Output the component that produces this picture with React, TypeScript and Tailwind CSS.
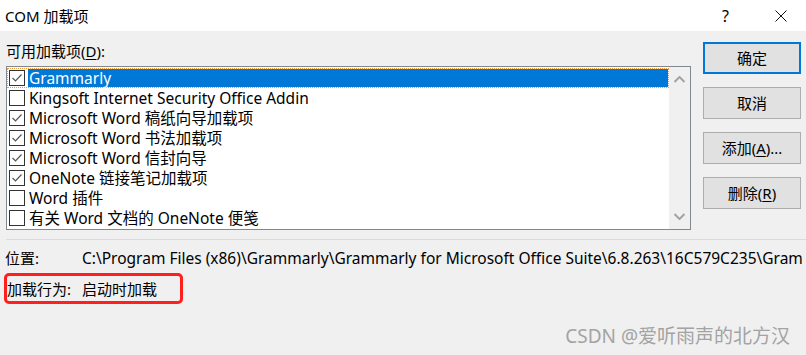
const items = [
  { label: "Grammarly", checked: true },
  { label: "Kingsoft Internet Security Office Addin", checked: false },
  { label: "Microsoft Word 稿纸向导加载项", checked: true },
  { label: "Microsoft Word 书法加载项", checked: true },
  { label: "Microsoft Word 信封向导", checked: true },
  { label: "OneNote 链接笔记加载项", checked: true },
  { label: "Word 插件", checked: false },
  { label: "有关 Word 文档的 OneNote 便笺", checked: false },
];

const Checkbox = ({ checked }: { checked: boolean }) => (
  <div className="w-[16px] h-[16px] border border-[#333] bg-white flex items-center justify-center shrink-0">
    {checked && (
      <svg width="14" height="14" viewBox="0 0 14 14">
        <path d="M2.5 7 L5.5 10 L11.5 3.5" fill="none" stroke="#555" strokeWidth="1.2" />
      </svg>
    )}
  </div>
);

const DialogButton = ({ children, primary }: { children: React.ReactNode; primary?: boolean }) => (
  <button
    className={
      primary
        ? "w-[98px] h-[32px] bg-[#e1e1e1] border-2 border-[#0078d7] text-[15px] text-black"
        : "w-[98px] h-[32px] bg-[#e1e1e1] border border-[#adadad] text-[15px] text-black"
    }
  >
    {children}
  </button>
);

export default function App() {
  return (
    <div
      className="relative w-[806px] h-[355px] overflow-hidden bg-[#f0f0f0] text-black"
      style={{ fontFamily: '"Noto Sans", "Noto Sans CJK SC", sans-serif' }}
    >
      {/* Title bar */}
      <div className="h-[31px] bg-white flex items-center">
        <span className="ml-[5px] text-[15px] leading-[20px]">COM 加载项</span>
        <span className="ml-auto mr-[46px] text-[16px] leading-[20px]">?</span>
        <svg className="mr-[19px]" width="12" height="12" viewBox="0 0 12 12">
          <path d="M0.5 0.5 L11.5 11.5 M11.5 0.5 L0.5 11.5" stroke="#111" strokeWidth="1" />
        </svg>
      </div>

      <div className="flex">
        {/* Left column */}
        <div className="ml-[6px] w-[685px] pt-[10px]">
          <div className="text-[15px] leading-[20px] mb-[5px]">
            可用加载项(<span className="underline underline-offset-2">D</span>):
          </div>
          <div className="h-[164px] border border-[#828790] bg-white flex">
            <div className="flex-1 pt-[1px]">
              {items.map((it, i) => (
                <div
                  key={i}
                  className={
                    i === 0
                      ? "h-[20px] flex items-center border border-dotted border-[#f29a38]"
                      : "h-[20px] flex items-center border border-transparent"
                  }
                >
                  <div className="w-[20px] pl-[1px] flex items-center">
                    <Checkbox checked={it.checked} />
                  </div>
                  <div
                    className={
                      i === 0
                        ? "flex-1 h-full bg-[#0078d7] text-white text-[15.5px] leading-[18px] pl-[1px] whitespace-nowrap"
                        : "flex-1 h-full text-[15.5px] leading-[18px] pl-[1px] whitespace-nowrap"
                    }
                  >
                    {it.label}
                  </div>
                </div>
              ))}
            </div>
            <div className="w-[21px] bg-[#f0f0f0] flex flex-col items-center justify-between py-[9px]">
              <svg width="11" height="7" viewBox="0 0 11 7">
                <path d="M0.5 6 L5.5 1 L10.5 6" fill="none" stroke="#a3a3a3" strokeWidth="2" />
              </svg>
              <svg width="11" height="7" viewBox="0 0 11 7">
                <path d="M0.5 1 L5.5 6 L10.5 1" fill="none" stroke="#a3a3a3" strokeWidth="2" />
              </svg>
            </div>
          </div>
        </div>

        {/* Buttons */}
        <div className="ml-[12px] pt-[11px] flex flex-col gap-[13px]">
          <DialogButton primary>确定</DialogButton>
          <DialogButton>取消</DialogButton>
          <DialogButton>
            添加(<span className="underline underline-offset-2">A</span>)...
          </DialogButton>
          <DialogButton>
            删除(<span className="underline underline-offset-2">R</span>)
          </DialogButton>
        </div>
      </div>

      {/* Separator */}
      <div className="ml-[6px] mt-[9px] h-px bg-[#dadada]" />

      {/* Details */}
      <div className="mt-[8px] flex leading-[20px] whitespace-nowrap overflow-hidden">
        <span className="ml-[5px] w-[77px] shrink-0 text-[15px]">位置:</span>
        <span className="text-[15.5px]">C:\Program Files (x86)\Grammarly\Grammarly for Microsoft Office Suite\6.8.263\16C579C235\Gram</span>
      </div>
      <div className="mt-[5px] ml-[4px] w-[179px] h-[31px] border-[3px] border-[#ff1f1f] rounded-[5px] flex items-center text-[15px] leading-[20px] whitespace-nowrap">
        <span className="w-[75px] shrink-0">加载行为:</span>
        <span>启动时加载</span>
      </div>

      {/* Watermark */}
      <div className="absolute right-[16px] bottom-[7px] text-[19px] leading-[24px] text-[#a3a3a3]">
        CSDN @爱听雨声的北方汉
      </div>
    </div>
  );
}
